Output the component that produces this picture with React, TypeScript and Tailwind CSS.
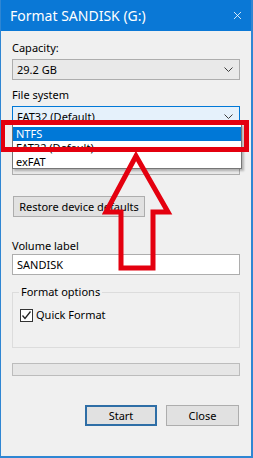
import { X } from "lucide-react"

function Chevron() {
  return (
    <svg width="9" height="6" viewBox="0 0 9 6" className="absolute right-[6px] top-[7px]">
      <polyline points="0.5,0.5 4.5,4.5 8.5,0.5" fill="none" stroke="#3c3c3c" strokeWidth="1" />
    </svg>
  )
}

function Select({ value, focused }: { value: string; focused?: boolean }) {
  return (
    <div
      className={`relative h-[21px] border pl-[4px] leading-[19px] ${
        focused ? "border-[#0078d7] bg-[#e5f1fb]" : "border-[#adadad] bg-[#e9e9e9]"
      }`}
    >
      {value}
      <Chevron />
    </div>
  )
}

export default function App() {
  return (
    <div
      className="relative w-[253px] h-[458px] overflow-hidden bg-[#f0f0f0] text-[11px] text-black border-l border-r-2 border-b-2 border-[#2f86d3]"
      style={{ fontFamily: '"Noto Sans", "Open Sans", sans-serif' }}
    >
      {/* title bar */}
      <div className="flex items-center justify-between h-[31px] -ml-px -mr-[2px] bg-[#0a78d6] pl-[10px] pr-[9px] text-white">
        <span className="text-[14px]">Format SANDISK (G:)</span>
        <X className="h-[13px] w-[13px]" strokeWidth={1.5} />
      </div>

      <div className="px-[11px]">
        <div className="mt-[9px] leading-[16px]">Capacity:</div>
        <div className="mt-[3px]">
          <Select value="29.2 GB" />
        </div>

        <div className="mt-[7px] leading-[16px]">File system</div>
        <div className="mt-[3px]">
          <Select value="FAT32 (Default)" focused />
        </div>

        {/* allocation unit size, hidden behind the open list */}
        <div className="mt-[8px] h-[16px]" />
        <div className="mt-[3px]">
          <Select value="" />
        </div>

        <button className="mt-[21px] ml-px h-[21px] w-[132px] border border-[#adadad] bg-[#e1e1e1] leading-[19px]">
          Restore device defaults
        </button>

        <div className="mt-[21px] leading-[16px]">Volume label</div>
        <div className="h-[21px] border border-[#adadad] bg-white pl-[4px] leading-[19px]">SANDISK</div>

        {/* format options group */}
        <div className="relative mt-[17px] h-[56px] border border-[#dcdcdc]">
          <span className="absolute -top-[9px] left-[6px] bg-[#f0f0f0] px-[2px] leading-[16px]">Format options</span>
          <div className="mt-[14px] ml-[7px] flex items-center gap-[3px]">
            <div className="flex h-[13px] w-[13px] items-center justify-center border border-[#333] bg-white">
              <svg width="11" height="11" viewBox="0 0 11 11">
                <polyline points="1.5,5.5 4,8.5 9.5,1.5" fill="none" stroke="#222" strokeWidth="1.3" />
              </svg>
            </div>
            <span>Quick Format</span>
          </div>
        </div>

        {/* progress bar */}
        <div className="mt-[15px] h-[13px] border border-[#bcbcbc] bg-[#e6e6e6]" />

        <div className="mt-[29px] flex justify-end gap-[9px] pr-px">
          <button className="h-[21px] w-[72px] border-2 border-[#2e6ea6] bg-[#e1e1e1] leading-[17px]">Start</button>
          <button className="h-[21px] w-[73px] border border-[#adadad] bg-[#e1e1e1] leading-[19px]">Close</button>
        </div>
      </div>

      {/* open dropdown list */}
      <div className="absolute left-[11px] top-[124px] w-[230px] h-[45px] border border-[#767676] bg-white shadow-[2px_2px_2px_rgba(0,0,0,0.25)] pt-[2px]">
        <div className="h-[14px] bg-[#0078d7] pl-[3px] leading-[14px] text-white">NTFS</div>
        <div className="h-[14px] pl-[3px] leading-[14px]">FAT32 (Default)</div>
        <div className="h-[14px] pl-[3px] leading-[14px]">exFAT</div>
      </div>

      {/* red highlight box */}
      <div className="absolute -left-px top-[120px] w-[249px] h-[32px] border-[5px] border-[#e4000f]" />

      {/* red arrow */}
      <svg className="absolute left-0 top-0" width="253" height="458" viewBox="0 0 253 458">
        <polygon
          points="135,156 167,212 152,212 152,268 120,268 120,212 105,212"
          fill="none"
          stroke="#e4000f"
          strokeWidth="5"
          strokeLinejoin="miter"
        />
      </svg>
    </div>
  )
}
